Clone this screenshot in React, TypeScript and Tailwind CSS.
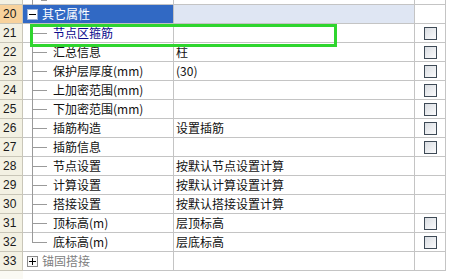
import React from "react";

type Row = {
  n: number;
  name: string;
  value?: string;
  check?: boolean;
  kind?: "group-open" | "group-closed" | "child";
  last?: boolean;
  blue?: boolean;
};

const rows: Row[] = [
  { n: 20, name: "其它属性", kind: "group-open" },
  { n: 21, name: "节点区箍筋", check: true, kind: "child", blue: true },
  { n: 22, name: "汇总信息", value: "柱", check: true, kind: "child" },
  { n: 23, name: "保护层厚度(mm)", value: "(30)", check: true, kind: "child" },
  { n: 24, name: "上加密范围(mm)", check: true, kind: "child" },
  { n: 25, name: "下加密范围(mm)", check: true, kind: "child" },
  { n: 26, name: "插筋构造", value: "设置插筋", check: true, kind: "child" },
  { n: 27, name: "插筋信息", check: true, kind: "child" },
  { n: 28, name: "节点设置", value: "按默认节点设置计算", kind: "child" },
  { n: 29, name: "计算设置", value: "按默认计算设置计算", kind: "child" },
  { n: 30, name: "搭接设置", value: "按默认搭接设置计算", kind: "child" },
  { n: 31, name: "顶标高(m)", value: "层顶标高", check: true, kind: "child" },
  { n: 32, name: "底标高(m)", value: "层底标高", check: true, kind: "child", last: true },
  { n: 33, name: "锚固搭接", kind: "group-closed" },
];

const font = { fontFamily: '"Noto Sans CJK SC", "Liberation Sans", sans-serif' };

function Checkbox() {
  return (
    <div className="w-[13px] h-[13px] border border-[#3e4a56] bg-gradient-to-br from-[#d9dde2] to-[#fbfbfc]" />
  );
}

function ExpBox({ open, dark }: { open: boolean; dark?: boolean }) {
  return (
    <div
      className={`w-[11px] h-[11px] border ${dark ? "border-[#9fb4d8] bg-white" : "border-[#8c8c8c] bg-[#fafafa]"} flex items-center justify-center relative`}
    >
      <div className="absolute w-[7px] h-[1px] bg-black left-[1px] top-[4px]" />
      {!open && <div className="absolute w-[1px] h-[7px] bg-black left-[4px] top-[1px]" />}
    </div>
  );
}

function RowView({ r }: { r: Row }) {
  const sel = r.kind === "group-open";
  return (
    <div className="flex h-[19px] text-[12px] leading-[18px]" style={font}>
      <div
        className={`w-[23px] shrink-0 border-r border-b border-[#c9c6b8] pl-[3px] text-[#1a1a1a] ${sel ? "bg-[#f8d29c]" : "bg-[#f3f1e3]"}`}
        style={{ fontFamily: '"Liberation Sans", sans-serif', fontSize: 12 }}
      >
        {r.n}
      </div>
      <div
        className={`w-[151px] shrink-0 border-r border-b flex items-center ${sel ? "bg-[#3169c4] border-[#c0c0c0] text-white" : "bg-white border-[#c4c4c4]"}`}
      >
        {r.kind === "child" ? (
          <>
            <div className="relative w-[16px] h-full ml-[9px] shrink-0">
              <div
                className={`absolute left-0 top-0 w-[1px] bg-[#9a9a9a] ${r.last ? "h-[9px]" : "h-[19px]"}`}
              />
              <div className="absolute left-0 top-[9px] w-[15px] h-[1px] bg-[#9a9a9a]" />
            </div>
            <span className={`ml-[5px] whitespace-nowrap ${r.blue ? "text-[#0a0a8c]" : "text-[#111]"}`}>
              {r.name}
            </span>
          </>
        ) : (
          <>
            <div className="ml-[4px]">
              <ExpBox open={r.kind === "group-open"} dark={sel} />
            </div>
            <span className={`ml-[4px] whitespace-nowrap ${sel ? "text-white" : "text-[#808080]"}`}>
              {r.name}
            </span>
          </>
        )}
      </div>
      <div
        className={`w-[241px] shrink-0 border-r border-b border-[#c4c4c4] pl-[2px] whitespace-nowrap text-[#111] ${sel ? "bg-[#dfe6f3]" : "bg-white"}`}
      >
        {r.value ?? ""}
      </div>
      <div className="w-[31px] shrink-0 border-r border-b border-[#c4c4c4] bg-white flex items-center pl-[9px]">
        {r.check && <Checkbox />}
      </div>
    </div>
  );
}

export default function App() {
  return (
    <div className="w-[453px] h-[279px] bg-white overflow-hidden relative">
      {/* partially visible previous row */}
      <div className="h-[5px] overflow-hidden flex flex-col justify-end">
        <div className="flex h-[19px] shrink-0">
          <div className="w-[23px] shrink-0 border-r border-b border-[#c9c6b8] bg-[#f3f1e3]" />
          <div className="w-[151px] shrink-0 border-r border-b border-[#c4c4c4] bg-white flex items-center">
            <div className="ml-[9px] w-[16px] h-full relative">
              <div className="absolute left-0 top-0 w-[1px] h-[19px] bg-[#9a9a9a]" />
            </div>
            <div className="ml-[-7px] w-[6px] h-[12px] border border-[#9a9a9a]" />
          </div>
          <div className="w-[241px] shrink-0 border-r border-b border-[#c4c4c4] bg-white" />
          <div className="w-[31px] shrink-0 border-r border-b border-[#c4c4c4] bg-white" />
        </div>
      </div>
      {rows.map((r) => (
        <RowView key={r.n} r={r} />
      ))}
      <div className="flex h-[10px]">
        <div className="w-[23px] shrink-0 bg-[#faf9f3]" />
      </div>
      {/* annotation highlight */}
      <div className="absolute left-[30px] top-[24px] w-[307px] h-[23px] border-[3px] border-[#2fd52f] pointer-events-none" />
    </div>
  );
}
